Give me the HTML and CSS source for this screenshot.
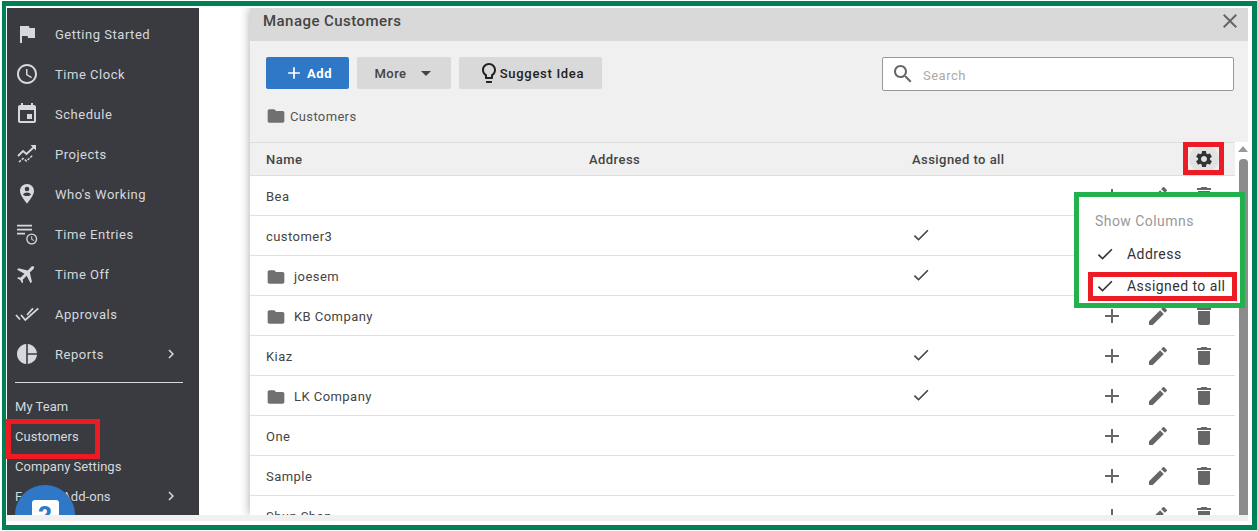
FILE: index.html
```html
<!DOCTYPE html>
<html lang="en">
<head>
<meta charset="utf-8">
<title>Manage Customers</title>
<link rel="stylesheet" href="styles.css">
</head>
<body>
<svg class="defs" aria-hidden="true">
  <symbol id="i-flag" viewBox="0 0 24 24"><path d="M14.4 6L14 4H5v17h2v-7h5.6l.4 2h7V6z"/></symbol>
  <symbol id="i-clock" viewBox="0 0 24 24"><path d="M11.99 2C6.47 2 2 6.48 2 12s4.47 10 9.99 10C17.52 22 22 17.52 22 12S17.52 2 11.99 2zM12 20c-4.42 0-8-3.58-8-8s3.58-8 8-8 8 3.58 8 8-3.58 8-8 8zm.5-13H11v6l5.25 3.15.75-1.23-4.5-2.67z"/></symbol>
  <symbol id="i-event" viewBox="0 0 24 24"><path d="M17 12h-5v5h5v-5zM16 1v2H8V1H6v2H5c-1.11 0-1.99.9-1.99 2L3 19c0 1.1.89 2 2 2h14c1.1 0 2-.9 2-2V5c0-1.1-.9-2-2-2h-1V1h-2zm3 18H5V8h14v11z"/></symbol>
  <symbol id="i-projects" viewBox="0 0 24 24"><path class="ln" d="M3 14l5-5 3.5 3L19 5"/><path d="M15.5 3H21v5.500z"/><path class="ln dash" d="M4 20l4-3.500 3.500 2.500 6-5.500"/></symbol>
  <symbol id="i-pin" viewBox="0 0 24 24"><path fill-rule="evenodd" d="M12 2C8 2 5 5 5 9c0 4.800 7 12.500 7 12.500S19 13.800 19 9c0-4-3-7-7-7zm0 2.700a2.300 2.300 0 1 1 0 4.600 2.300 2.300 0 0 1 0-4.600zM8 12.500c.6-1.200 2.300-2 4-2s3.400.8 4 2c-1 1-2.400 1.500-4 1.500s-3-.5-4-1.500z"/></symbol>
  <symbol id="i-entries" viewBox="0 0 24 24"><path d="M2 2.800h15v1.700H2zM2 6.800h15v1.700H2zM2 10.800h8v1.700H2z"/><path fill-rule="evenodd" d="M16.700 11.500a5.500 5.500 0 1 0 0 11 5.500 5.500 0 0 0 0-11zm0 1.300a4.200 4.200 0 1 1 0 8.400 4.200 4.200 0 0 1 0-8.400zM16.200 14.300v3.200l2.500 1.500.5-.8-2-1.200v-2.700z"/></symbol>
  <symbol id="i-flight" viewBox="0 0 24 24"><path transform="rotate(45 12 12)" d="M21 16v-2l-8-5V3.500c0-.83-.67-1.500-1.500-1.500S10 2.670 10 3.500V9l-8 5v2l8-2.500V19l-2 1.500V22l3.500-1 3.500 1v-1.500L13 19v-5.500l8 2.500z"/></symbol>
  <symbol id="i-approve" viewBox="0 0 24 24"><path class="ln" d="M1 13l4 4.500M6 13l4.300 5L23.300 6.300M12 13l6-6.700"/></symbol>
  <symbol id="i-pie" viewBox="0 0 24 24"><path d="M11.200 2v20C5.900 21.500 2 17.200 2 12S5.900 2.500 11.200 2zM12.800 2v9.200H22c-.5-4.900-4.300-8.700-9.200-9.200zM12.800 12.800V22c4.900-.5 8.700-4.300 9.200-9.200z"/></symbol>
  <symbol id="i-chev" viewBox="0 0 24 24"><path d="M8.590 16.590L13.170 12 8.590 7.410 10 6l6 6-6 6z"/></symbol>
  <symbol id="i-folder" viewBox="0 0 24 24"><path d="M10 4H4c-1.100 0-1.990.9-1.990 2L2 18c0 1.100.9 2 2 2h16c1.100 0 2-.9 2-2V8c0-1.100-.9-2-2-2h-8l-2-2z"/></symbol>
  <symbol id="i-check" viewBox="0 0 24 24"><path d="M9 16.170L4.830 12l-1.420 1.410L9 19 21 7l-1.410-1.410z"/></symbol>
  <symbol id="i-plus" viewBox="0 0 24 24"><path d="M19 13h-6v6h-2v-6H5v-2h6V5h2v6h6v2z"/></symbol>
  <symbol id="i-edit" viewBox="0 0 24 24"><path d="M3 17.250V21h3.750L17.810 9.940l-3.750-3.750L3 17.250zM20.710 7.040c.39-.39.39-1.020 0-1.410l-2.340-2.340c-.39-.39-1.020-.39-1.410 0l-1.830 1.830 3.750 3.750 1.830-1.830z"/></symbol>
  <symbol id="i-trash" viewBox="0 0 24 24"><path d="M6 19c0 1.100.9 2 2 2h8c1.100 0 2-.9 2-2V7H6v12zM19 4h-3.500l-1-1h-5l-1 1H5v2h14V4z"/></symbol>
  <symbol id="i-gear" viewBox="0 0 24 24"><path d="M19.140 12.940c.04-.3.06-.61.06-.94 0-.32-.02-.64-.07-.94l2.030-1.580c.18-.14.23-.41.12-.61l-1.920-3.320c-.12-.22-.37-.29-.59-.22l-2.390.96c-.5-.38-1.030-.7-1.620-.94l-.36-2.540c-.04-.24-.24-.41-.48-.41h-3.840c-.24 0-.43.17-.47.41l-.36 2.540c-.59.24-1.130.57-1.620.94l-2.390-.96c-.22-.08-.47 0-.59.22L2.740 8.870c-.12.21-.08.47.12.61l2.030 1.580c-.05.3-.09.63-.09.94s.02.64.07.94l-2.030 1.580c-.18.14-.23.41-.12.61l1.920 3.320c.12.22.37.29.59.22l2.390-.96c.5.38 1.030.7 1.620.94l.36 2.540c.05.24.24.41.48.41h3.840c.24 0 .44-.17.47-.41l.36-2.540c.59-.24 1.130-.56 1.620-.94l2.390.96c.22.08.47 0 .59-.22l1.920-3.320c.12-.22.07-.47-.12-.61l-2.010-1.580zM12 15.600c-1.980 0-3.600-1.620-3.600-3.600s1.620-3.600 3.600-3.600 3.600 1.620 3.600 3.600-1.620 3.600-3.600 3.600z"/></symbol>
  <symbol id="i-close" viewBox="0 0 24 24"><path d="M19 6.410L17.590 5 12 10.590 6.410 5 5 6.410 10.590 12 5 17.590 6.410 19 12 13.410 17.590 19 19 17.590 13.410 12z"/></symbol>
  <symbol id="i-search" viewBox="0 0 24 24"><path d="M15.500 14h-.79l-.28-.27C15.410 12.590 16 11.110 16 9.500 16 5.910 13.090 3 9.500 3S3 5.910 3 9.500 5.910 16 9.500 16c1.610 0 3.090-.59 4.230-1.570l.27.28v.79l5 4.990L20.490 19l-4.990-5zm-6 0C7.010 14 5 11.990 5 9.500S7.010 5 9.500 5 14 7.010 14 9.500 11.990 14 9.500 14z"/></symbol>
  <symbol id="i-bulb" viewBox="0 0 24 24"><path d="M9 21c0 .55.45 1 1 1h4c.55 0 1-.45 1-1v-1H9v1zm3-19C8.140 2 5 5.140 5 9c0 2.380 1.190 4.470 3 5.740V17c0 .55.45 1 1 1h6c.55 0 1-.45 1-1v-2.260c1.810-1.270 3-3.360 3-5.740 0-3.860-3.140-7-7-7zm2.850 11.100l-.85.6V16h-4v-2.300l-.85-.6C7.800 12.160 7 10.630 7 9c0-2.760 2.240-5 5-5s5 2.240 5 5c0 1.630-.8 3.160-2.150 4.100z"/></symbol>
</svg>

<div class="frame">
  <div class="app">
    <aside class="sidebar">
      <nav class="nav">
        <a class="nav-item"><svg class="ico"><use href="#i-flag"/></svg><span>Getting Started</span></a>
        <a class="nav-item"><svg class="ico"><use href="#i-clock"/></svg><span>Time Clock</span></a>
        <a class="nav-item"><svg class="ico"><use href="#i-event"/></svg><span>Schedule</span></a>
        <a class="nav-item"><svg class="ico"><use href="#i-projects"/></svg><span>Projects</span></a>
        <a class="nav-item"><svg class="ico"><use href="#i-pin"/></svg><span>Who's Working</span></a>
        <a class="nav-item"><svg class="ico"><use href="#i-entries"/></svg><span>Time Entries</span></a>
        <a class="nav-item"><svg class="ico"><use href="#i-flight"/></svg><span>Time Off</span></a>
        <a class="nav-item"><svg class="ico"><use href="#i-approve"/></svg><span>Approvals</span></a>
        <a class="nav-item"><svg class="ico"><use href="#i-pie"/></svg><span>Reports</span><svg class="chev"><use href="#i-chev"/></svg></a>
      </nav>
      <div class="divider"></div>
      <div class="links">
        <a class="link">My Team</a>
        <a class="link">Customers</a>
        <a class="link">Company Settings</a>
        <a class="link">Feature Add-ons<svg class="chev"><use href="#i-chev"/></svg></a>
      </div>
      <div class="help"><span class="help-q">?</span></div>
    </aside>

    <section class="modal">
      <header class="modal-head">
        <h1 class="modal-title">Manage Customers</h1>
        <svg class="close"><use href="#i-close"/></svg>
      </header>
      <div class="toolbar">
        <div class="tool-row">
          <button class="btn btn-add"><svg class="btn-plus"><use href="#i-plus"/></svg>Add</button>
          <button class="btn btn-more">More<span class="caret"></span></button>
          <button class="btn btn-idea"><svg class="btn-bulb"><use href="#i-bulb"/></svg>Suggest Idea</button>
          <div class="search"><svg class="search-ico"><use href="#i-search"/></svg><span class="search-text">Search</span></div>
        </div>
        <div class="crumb"><svg class="folder"><use href="#i-folder"/></svg><span>Customers</span></div>
      </div>
      <div class="table-wrap">
        <div class="table">
          <div class="row-head">
            <span>Name</span><span>Address</span><span>Assigned to all</span>
            <span class="gear-cell"><span class="gear-bg"><svg class="gear"><use href="#i-gear"/></svg></span></span>
          </div>
          <div class="rows">
            <div class="row"><div class="name">Bea</div><div></div><div></div><div class="acts"><svg><use href="#i-plus"/></svg><svg><use href="#i-edit"/></svg><svg><use href="#i-trash"/></svg></div></div>
            <div class="row"><div class="name">customer3</div><div></div><div><svg class="tick"><use href="#i-check"/></svg></div><div class="acts"><svg><use href="#i-plus"/></svg><svg><use href="#i-edit"/></svg><svg><use href="#i-trash"/></svg></div></div>
            <div class="row"><div class="name"><svg class="folder"><use href="#i-folder"/></svg>joesem</div><div></div><div><svg class="tick"><use href="#i-check"/></svg></div><div class="acts"><svg><use href="#i-plus"/></svg><svg><use href="#i-edit"/></svg><svg><use href="#i-trash"/></svg></div></div>
            <div class="row"><div class="name"><svg class="folder"><use href="#i-folder"/></svg>KB Company</div><div></div><div></div><div class="acts"><svg><use href="#i-plus"/></svg><svg><use href="#i-edit"/></svg><svg><use href="#i-trash"/></svg></div></div>
            <div class="row"><div class="name">Kiaz</div><div></div><div><svg class="tick"><use href="#i-check"/></svg></div><div class="acts"><svg><use href="#i-plus"/></svg><svg><use href="#i-edit"/></svg><svg><use href="#i-trash"/></svg></div></div>
            <div class="row"><div class="name"><svg class="folder"><use href="#i-folder"/></svg>LK Company</div><div></div><div><svg class="tick"><use href="#i-check"/></svg></div><div class="acts"><svg><use href="#i-plus"/></svg><svg><use href="#i-edit"/></svg><svg><use href="#i-trash"/></svg></div></div>
            <div class="row"><div class="name">One</div><div></div><div></div><div class="acts"><svg><use href="#i-plus"/></svg><svg><use href="#i-edit"/></svg><svg><use href="#i-trash"/></svg></div></div>
            <div class="row"><div class="name">Sample</div><div></div><div></div><div class="acts"><svg><use href="#i-plus"/></svg><svg><use href="#i-edit"/></svg><svg><use href="#i-trash"/></svg></div></div>
            <div class="row"><div class="name">Shun Shop</div><div></div><div></div><div class="acts"><svg><use href="#i-plus"/></svg><svg><use href="#i-edit"/></svg><svg><use href="#i-trash"/></svg></div></div>
          </div>
        </div>
        <div class="scrollbar"><span class="scroll-up"></span><span class="scroll-thumb"></span></div>
      </div>
      <div class="mark mark-gear"></div>
      <div class="menu">
        <div class="menu-title">Show Columns</div>
        <div class="menu-item"><svg class="menu-check"><use href="#i-check"/></svg>Address</div>
        <div class="menu-item menu-marked"><svg class="menu-check"><use href="#i-check"/></svg>Assigned to all</div>
      </div>
    </section>
  </div>
  <div class="strip"></div>
  <div class="mark mark-customers"></div>
</div>
</body>
</html>
```

FILE: styles.css
```css
* { box-sizing: border-box; }
html, body { margin: 0; height: 100%; background: #fff; overflow: hidden; }
body { padding: 1px 0 1px 2px; font-family: Roboto, "Liberation Sans", sans-serif; font-size: 13px; }
.defs { display: none; }
svg { fill: currentColor; display: block; }
.ln { fill: none; stroke: currentColor; stroke-width: 1.800; }
.dash { stroke-dasharray: 2.500 1.200; stroke-width: 1.500; }

.frame { position: relative; height: 529px; border: solid #008055; border-width: 5px 5px 5px 4px; padding: 2px 4px 4px 1px; display: flex; flex-direction: column; }
.app { display: flex; height: 507px; overflow: hidden; flex: none; }
.strip { height: 6px; background: #f0f0f0; flex: none; }

.sidebar { position: relative; width: 192px; flex: none; background: #3a3b40; color: #d5d9de; overflow: hidden; padding-top: 6px; }
.nav-item { display: flex; align-items: center; height: 40px; padding-left: 8px; letter-spacing: .52px; }
.ico { width: 24px; height: 24px; flex: none; margin-right: 16px; }
.nav-item .chev { margin-left: auto; margin-right: 19px; }
.chev { width: 18px; height: 18px; flex: none; }
.divider { height: 1px; background: #d5d9de; margin: 8px 16px 8px 8px; }
.link { display: flex; align-items: center; height: 30px; padding-left: 8px; letter-spacing: .05px; }
.link .chev { margin-left: auto; margin-right: 19px; }
.help { position: absolute; left: 8px; top: 477px; width: 60px; height: 60px; border-radius: 50%; background: #2f78c8; display: flex; justify-content: center; padding-top: 15px; }
.help-q { width: 27px; height: 30px; background: #fff; border-radius: 3px; color: #2f78c8; font-weight: 700; font-size: 27px; line-height: 34px; text-align: center; }
.mark { position: absolute; border: 5px solid #ed1c24; pointer-events: none; }
.mark-customers { left: 0; top: 413px; width: 94px; height: 40px; }

.modal { position: relative; margin-left: 51px; width: 998px; flex: none; display: flex; flex-direction: column; background: #fff; box-shadow: 0 0 10px rgba(0,0,0,.35); color: #333; }
.modal-head { height: 33px; flex: none; background: #d9d9d9; position: relative; padding: 4px 13px 0; }
.modal-title { margin: 0; font-size: 15px; line-height: 18px; font-weight: 500; letter-spacing: .45px; color: #444; }
.close { position: absolute; right: 6px; top: 1px; width: 24px; height: 24px; color: #666; }

.toolbar { height: 101px; flex: none; background: #f0f0f0; padding: 16px 14px 0 16px; }
.tool-row { display: flex; align-items: flex-start; gap: 8px; }
.btn { height: 32px; border: 0; border-radius: 2px; display: flex; align-items: center; justify-content: center; font: 500 13px Roboto, sans-serif; letter-spacing: .7px; background: #d9d9d9; color: #444; padding: 0; }
.btn-add { width: 83px; background: #2f78c8; color: #fff; font-weight: 700; letter-spacing: .55px; padding-left: 1px; }
.btn-plus { width: 20px; height: 20px; margin-right: 3px; }
.btn-more { width: 94px; padding-right: 2px; font-weight: 500; letter-spacing: .4px; }
.caret { width: 0; height: 0; border: solid transparent; border-width: 5px 5px 0; border-top-color: #444; margin-left: 15px; }
.btn-idea { width: 143px; color: #222; }
.btn-bulb { width: 24px; height: 24px; margin-right: -1px; }
.search { margin-left: auto; width: 352px; height: 34px; border: 1px solid #999; border-radius: 2px; background: #fff; display: flex; align-items: center; padding: 0 0 0 8px; color: #aaa; letter-spacing: .5px; }
.search-ico { width: 24px; height: 24px; color: #666; margin-right: 8px; }
.search-text { padding-top: 2px; }
.crumb { display: flex; align-items: center; height: 20px; margin-top: 15px; color: #555; letter-spacing: .35px; }
.folder { width: 20px; height: 20px; color: #707070; flex: none; margin-right: 4px; }

.table-wrap { flex: 1; display: flex; min-height: 0; overflow: hidden; }
.table { width: 985px; flex: none; display: flex; flex-direction: column; background: #fff; }
.row-head, .row { display: grid; grid-template-columns: 323px 323px 1fr 146px; padding-left: 16px; align-items: center; }
.row-head { height: 34px; flex: none; background: #f0f0f0; border-top: 1px solid #ddd; border-bottom: 1px solid #ddd; font-weight: 500; letter-spacing: .45px; color: #444; }
.gear-cell { display: flex; justify-content: flex-end; }
.gear-bg { width: 30px; height: 26px; border-radius: 13px; background: #e2e2e2; display: flex; align-items: center; justify-content: center; margin-right: 16px; }
.gear { width: 20px; height: 20px; color: #333; }
.mark-gear { left: 933px; top: 134px; width: 41px; height: 33px; }
.rows { flex: 1; overflow: hidden; }
.row { height: 40px; border-bottom: 1px solid #e0e0e0; letter-spacing: .45px; color: #444; }
.name { display: flex; align-items: center; padding-top: 2px; }
.name .folder { margin: 0 8px 0 0; }
.tick { width: 20px; height: 20px; color: #444; margin: -2px 0 0 -1px; }
.acts { display: flex; color: #666; padding-left: 0; }
.acts svg { width: 24px; height: 24px; margin: 0 11px; flex: none; }
.scrollbar { flex: 1; background: #fff; padding: 4px 1px 0 3px; display: flex; flex-direction: column; align-items: center; }
.scroll-up { width: 0; height: 0; border: solid transparent; border-width: 0 5px 6px; border-bottom-color: #999; }
.scroll-thumb { width: 9px; flex: 1; margin-top: 7px; background: #8c8c8c; border-radius: 4px 4px 0 0; }

.menu { position: absolute; left: 824px; top: 184px; width: 171px; height: 116px; background: #fff; border: 5px solid #22b14c; padding: 14px 0 0 9px; color: #333; font-size: 14px; letter-spacing: .45px; }
.menu-title { margin-left: 7px; height: 20px; line-height: 20px; color: #999; margin-bottom: 9px; }
.menu-item { display: flex; align-items: center; width: 149px; height: 29px; padding: 0 0 2px 2px; border: 5px solid transparent; margin-bottom: 3px; }
.menu-marked { border-color: #ed1c24; }
.menu-check { width: 20px; height: 20px; margin-right: 12px; flex: none; }
```
